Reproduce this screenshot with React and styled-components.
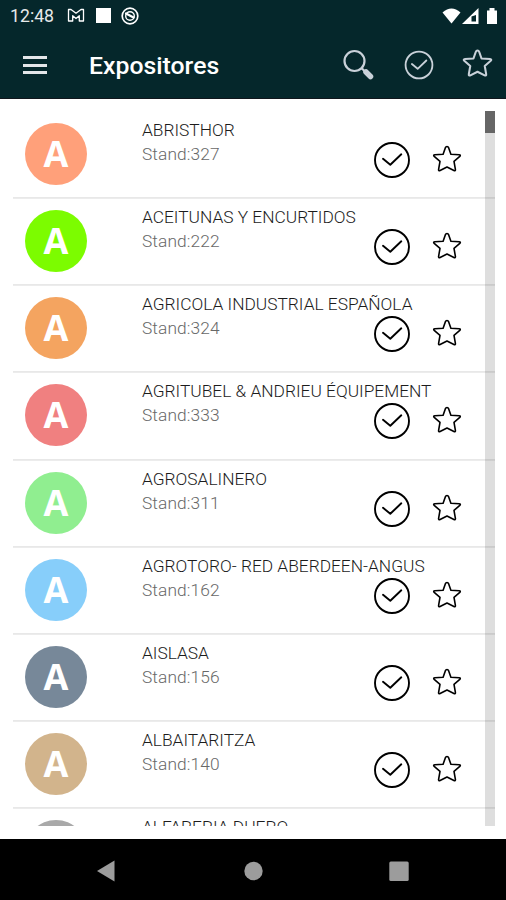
import styled, { createGlobalStyle } from 'styled-components';

const exhibitors = [
	{ name: 'ABRISTHOR', stand: 327, color: '#ffa07a' },
	{ name: 'ACEITUNAS Y ENCURTIDOS', stand: 222, color: '#7cfc00' },
	{ name: 'AGRICOLA INDUSTRIAL ESPAÑOLA', stand: 324, color: '#f4a460' },
	{ name: 'AGRITUBEL & ANDRIEU ÉQUIPEMENT', stand: 333, color: '#f08080' },
	{ name: 'AGROSALINERO', stand: 311, color: '#90ee90' },
	{ name: 'AGROTORO- RED ABERDEEN-ANGUS', stand: 162, color: '#87cefa' },
	{ name: 'AISLASA', stand: 156, color: '#778899' },
	{ name: 'ALBAITARITZA', stand: 140, color: '#d2b48c' },
	{ name: 'ALFARERIA DUERO', color: '#a9a9a9' },
];

const STAR =
	'M15 1.500c.9 0 1.400.6 1.700 1.400l2.200 6.300 8.200.5c1.400.1 1.500 1 .7 1.700l-5.800 5 1.400 7.900c.2 1.300-.5 1.700-1.500 1.200L15 22l-6.900 3.500c-1 .5-1.700.1-1.500-1.200L8 16.400l-5.800-5c-.8-.7-.7-1.600.7-1.700l8.200-.5 2.200-6.300c.3-.8.8-1.400 1.700-1.400z';

const CheckIcon = ({ size, stroke }) => (
	<Icon width={size} height={size} viewBox='0 0 38 38' strokeWidth={stroke}>
		<circle cx='19' cy='19' r='17' />
		<path d='M10 17.800l7.300 6 11-10.500' />
	</Icon>
);

const StarIcon = ({ size, stroke }) => (
	<Icon width={size} height={size} viewBox='0 0 30 30' strokeWidth={stroke}>
		<path d={STAR} />
	</Icon>
);

const StatusBar = () => (
	<StyledStatus>
		<Clock>12:48</Clock>
		<Icon width='18' height='16' viewBox='0 0 18 16' strokeWidth='1.3'>
			<path d='M1.500 1.500h2.500l5 3.700 5-3.700h2.500v11.500h-4.200V7.700L9 10.500 5.700 7.700v5.300H1.500z' />
		</Icon>
		<Notification />
		<Icon width='20' height='20' viewBox='0 0 20 20' strokeWidth='1.7'>
			<circle cx='10' cy='10' r='7.800' />
			<circle cx='10' cy='10' r='4.300' strokeWidth='1.400' />
			<path d='M6 7.500l7.500 4' strokeWidth='2.200' />
		</Icon>
		<Signals width='58' height='18' viewBox='0 0 58 18'>
			<path d='M1.500 5.500Q10.500-2.500 19.500 5.500L10.500 16.500z' />
			<path fillRule='evenodd' d='M21 17L37.500 1v16zM30.500 9.500v5h4.500V8z' />
			<path d='M46 3.500h2.500V1h5v2.500H56V17H46z' />
		</Signals>
	</StyledStatus>
);

const Row = props => (
	<StyledRow>
		<Avatar color={props.color}>{props.stand ? 'A' : null}</Avatar>
		<Info>
			<Name>{props.name}</Name>
			{props.stand && <Stand>Stand:{props.stand}</Stand>}
		</Info>
		<Actions>
			<CheckIcon size={38} stroke={1.9} />
			<StarIcon size={30} stroke={1.6} />
		</Actions>
	</StyledRow>
);

const App = () => (
	<Screen>
		<GlobalStyle />
		<Header>
			<StatusBar />
			<Toolbar>
				<Menu>
					<i />
					<i />
					<i />
				</Menu>
				<Title>Expositores</Title>
				<Tools>
					<Icon width='34' height='34' viewBox='0 0 34 34' strokeWidth='2.200'>
						<circle cx='12.500' cy='13' r='10' />
						<path d='M20 20.500l3 3' />
						<path d='M24 24l4.500 4.500' strokeWidth='5.500' />
					</Icon>
					<CheckIcon size={30} stroke={2.3} />
					<StarIcon size={31} stroke={2} />
				</Tools>
			</Toolbar>
		</Header>
		<List>
			{exhibitors.map(e => (
				<Row key={e.name} {...e} />
			))}
			<Scrollbar />
		</List>
		<NavBar>
			<svg width='20' height='22' viewBox='0 0 20 22'>
				<path d='M1 11L18.500.500v21z' />
			</svg>
			<svg width='20' height='22' viewBox='0 0 20 22'>
				<circle cx='10.500' cy='11' r='9.200' />
			</svg>
			<svg width='20' height='22' viewBox='0 0 20 22'>
				<rect x='.3' y='1.500' width='19.400' height='19.400' rx='1.500' />
			</svg>
		</NavBar>
	</Screen>
);

const GlobalStyle = createGlobalStyle`
	* {
		box-sizing: border-box;
	}
	body {
		margin: 0;
		font-family: Roboto, sans-serif;
	}
	p {
		margin: 0;
	}
`;

const Screen = styled.div`
	display: flex;
	flex-direction: column;
	width: 506px;
	height: 900px;
	background-color: #fff;
	overflow: hidden;
`;

const Header = styled.header`
	height: 99px;
	flex-shrink: 0;
	background-color: #05272b;
	border-bottom: 1px solid #10161c;
	color: #fff;
`;

const StyledStatus = styled.div`
	display: flex;
	align-items: center;
	height: 31px;
	padding: 0 7px 0 10px;
`;

const Clock = styled.span`
	width: 57px;
	font-size: 17.7px;
	color: #e6eaea;
`;

const Icon = styled.svg`
	flex-shrink: 0;
	fill: none;
	stroke: currentColor;
	stroke-linejoin: round;
	stroke-linecap: round;
`;

const Notification = styled.span`
	width: 15px;
	height: 15px;
	margin: 0 9.5px 0 10.5px;
	background-color: #fff;
`;

const Signals = styled.svg`
	margin-left: auto;
	fill: #fff;
`;

const Toolbar = styled.div`
	display: flex;
	align-items: center;
	height: 68px;
	padding: 0 13px 0 23px;
`;

const Menu = styled.div`
	display: flex;
	flex-direction: column;
	gap: 4.5px;
	width: 23.5px;
	i {
		height: 3px;
		background-color: #e4e6e9;
	}
`;

const Title = styled.h1`
	margin: 1px 0 0 42.5px;
	font-size: 24.8px;
	font-weight: 500;
`;

const Tools = styled.div`
	display: flex;
	align-items: center;
	margin: -1px 0 0 auto;
	color: #c9d1d9;
	gap: 28px;
`;

const List = styled.main`
	position: relative;
	height: 715px;
	margin: 12px 11px 13px 13px;
	flex-shrink: 0;
	overflow: hidden;
`;

const StyledRow = styled.div`
	display: flex;
	height: 87.15px;
	padding: 0 33px 0 12px;
	border-bottom: 1px solid #e8e8e8;
	box-shadow: 0 1px #ececec;
`;

const Avatar = styled.div`
	display: flex;
	align-items: center;
	justify-content: center;
	width: 62px;
	height: 62px;
	margin-top: 12px;
	padding-bottom: 1px;
	flex-shrink: 0;
	border-radius: 50%;
	background-color: ${props => props.color};
	color: #fff;
	font: bold 36px 'Open Sans', sans-serif;
`;

const Info = styled.div`
	width: 230px;
	margin-left: 55px;
	padding-top: 7px;
	font-size: 17.33px;
	font-weight: 300;
	line-height: 24px;
	white-space: nowrap;
`;

const Name = styled.p`
	color: #1c1c1c;
`;

const Stand = styled.p`
	color: #686868;
	letter-spacing: 0.1px;
`;

const Actions = styled.div`
	display: flex;
	align-items: center;
	gap: 21px;
	height: 38px;
	margin: 30px 0 0 auto;
`;

const Scrollbar = styled.div`
	position: absolute;
	top: 0;
	right: 0;
	width: 10px;
	height: 100%;
	background: linear-gradient(#666 22px, rgba(0, 0, 0, 0.13) 22px);
`;

const NavBar = styled.nav`
	display: flex;
	align-items: center;
	justify-content: space-between;
	height: 61px;
	padding: 3px 97px 0 96px;
	background-color: #000;
	fill: #9c9c9c;
`;

export default App;
